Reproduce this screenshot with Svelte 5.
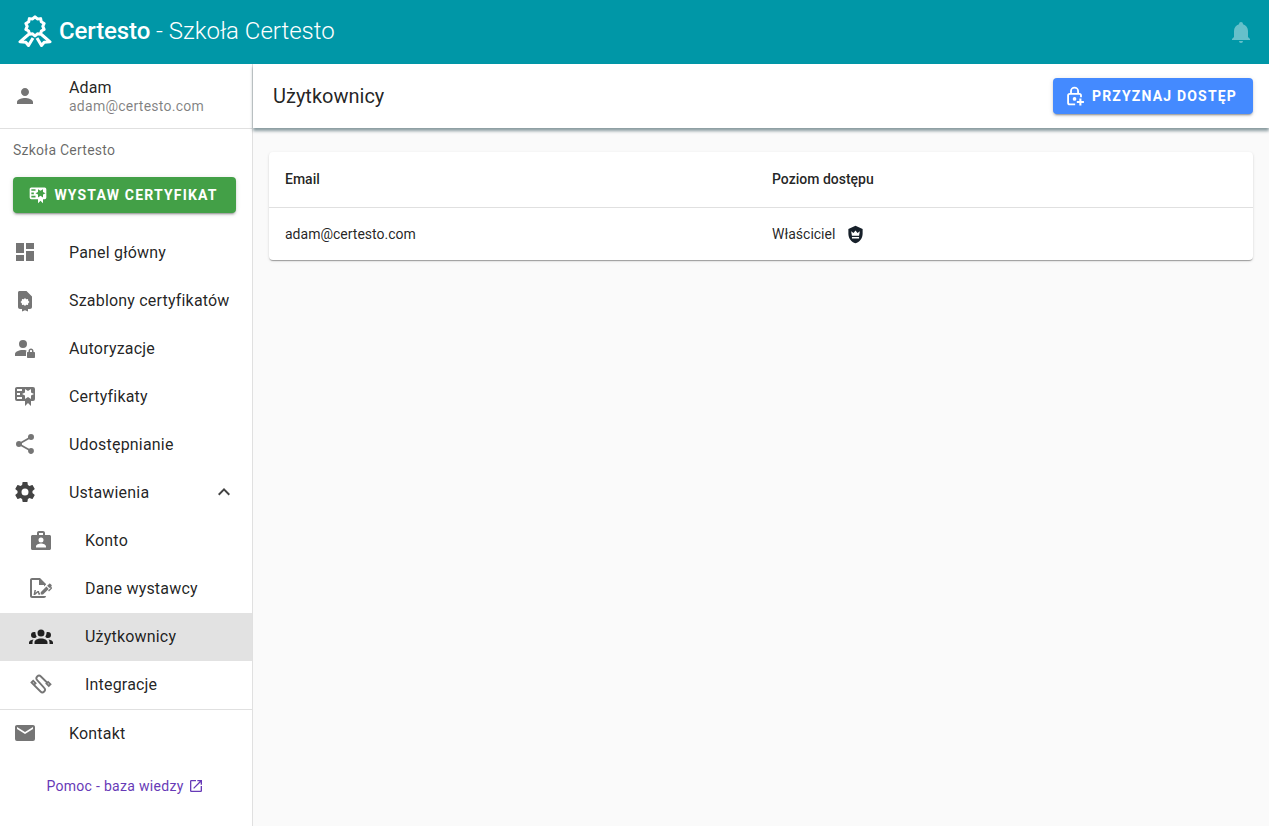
<script>
  const icons = {
    person: "M12 12c2.21 0 4-1.79 4-4s-1.79-4-4-4-4 1.79-4 4 1.79 4 4 4zm0 2c-2.67 0-8 1.34-8 4v2h16v-2c0-2.66-5.33-4-8-4z",
    dashboard: "M13,3V9H21V3M13,21H21V11H13M3,21H11V15H3M3,13H11V3H3V13Z",
    template: "M6.5 3H13.5L19 8.5V19C19 20.1 18.1 21 17 21H15V23.5L12 22.3L9 23.5V21H7C5.9 21 5 20.1 5 19V4.5C5 3.7 5.7 3 6.5 3ZM12 10L13.2 11.3L15 11L15.2 12.8L16.5 14L15.2 15.2L15 17L13.2 16.7L12 18L10.8 16.7L9 17L8.8 15.2L7.5 14L8.8 12.8L9 11L10.8 11.3Z",
    authorization: "M10 4A4 4 0 0 0 6 8A4 4 0 0 0 10 12A4 4 0 0 0 14 8A4 4 0 0 0 10 4M10 14C5.58 14 2 15.79 2 18V20H13V17C13 16 13.2 15.2 13.6 14.4C12.5 14.1 11.3 14 10 14ZM18 12.5C16.6 12.5 15.5 13.6 15.5 15V16H15C14.4 16 14 16.4 14 17V21C14 21.6 14.4 22 15 22H21C21.6 22 22 21.6 22 21V17C22 16.4 21.6 16 21 16H20.5V15C20.5 13.6 19.4 12.5 18 12.5M18 14C18.6 14 19 14.4 19 15V16H17V15C17 14.4 17.4 14 18 14Z",
    certificate: "M4,3C2.89,3 2,3.89 2,5V15A2,2 0 0,0 4,17H12V22L15,19L18,22V17H20A2,2 0 0,0 22,15V8L22,6V5A2,2 0 0,0 20,3H16V3H4M12,5L15,7L18,5V8.5L21,10L18,11.5V15L15,13L12,15V11.5L9,10L12,8.5V5M4,5H9V7H4V5M4,9H7V11H4V9M4,13H9V15H4V13Z",
    share: "M18,16.08C17.24,16.08 16.56,16.38 16.04,16.85L8.91,12.7C8.96,12.47 9,12.24 9,12C9,11.76 8.96,11.53 8.91,11.3L15.96,7.19C16.5,7.69 17.21,8 18,8A3,3 0 0,0 21,5A3,3 0 0,0 18,2A3,3 0 0,0 15,5C15,5.24 15.04,5.47 15.09,5.7L8.04,9.81C7.5,9.31 6.79,9 6,9A3,3 0 0,0 3,12A3,3 0 0,0 6,15C6.79,15 7.5,14.69 8.04,14.19L15.16,18.34C15.11,18.55 15.08,18.77 15.08,19C15.08,20.61 16.39,21.91 18,21.91C19.61,21.91 20.92,20.61 20.92,19A2.92,2.92 0 0,0 18,16.08Z",
    cog: "M12,15.5A3.5,3.5 0 0,1 8.5,12A3.5,3.5 0 0,1 12,8.5A3.5,3.5 0 0,1 15.5,12A3.5,3.5 0 0,1 12,15.5M19.43,12.97C19.47,12.65 19.5,12.33 19.5,12C19.5,11.67 19.47,11.34 19.43,11L21.54,9.37C21.73,9.22 21.78,8.95 21.66,8.73L19.66,5.27C19.54,5.05 19.27,4.96 19.05,5.05L16.56,6.05C16.04,5.66 15.5,5.32 14.87,5.07L14.5,2.42C14.46,2.18 14.25,2 14,2H10C9.75,2 9.54,2.18 9.5,2.42L9.13,5.07C8.5,5.32 7.96,5.66 7.44,6.05L4.95,5.05C4.73,4.96 4.46,5.05 4.34,5.27L2.34,8.73C2.21,8.95 2.27,9.22 2.46,9.37L4.57,11C4.53,11.34 4.5,11.67 4.5,12C4.5,12.33 4.53,12.65 4.57,12.97L2.46,14.63C2.27,14.78 2.21,15.05 2.34,15.27L4.34,18.73C4.46,18.95 4.73,19.03 4.95,18.95L7.44,17.94C7.96,18.34 8.5,18.68 9.13,18.93L9.5,21.58C9.54,21.82 9.75,22 10,22H14C14.25,22 14.46,21.82 14.5,21.58L14.87,18.93C15.5,18.67 16.04,18.34 16.56,17.94L19.05,18.95C19.27,19.03 19.54,18.95 19.66,18.73L21.66,15.27C21.78,15.05 21.73,14.78 21.54,14.63L19.43,12.97Z",
    account: "M10 3H14C15.1 3 16 3.9 16 5V7H20.5C21.3 7 22 7.7 22 8.5V20.5C22 21.3 21.3 22 20.5 22H3.5C2.7 22 2 21.3 2 20.5V8.5C2 7.7 2.7 7 3.5 7H8V5C8 3.9 8.9 3 10 3M10 5V7H14V5H10M12 9.5A2.5 2.5 0 0 0 9.5 12A2.5 2.5 0 0 0 12 14.5A2.5 2.5 0 0 0 14.5 12A2.5 2.5 0 0 0 12 9.5M7 19.5H17V18.5C17 16.5 14.2 15.5 12 15.5C9.8 15.5 7 16.5 7 18.5V19.5Z",
    issuer: "M19.7,12.9L14,18.6H11.7V16.3L17.4,10.6L19.7,12.9M23.1,12.1C23.1,12.4 22.8,12.7 22.5,13L20,15.5L19.1,14.6L21.7,12L21.1,11.4L20.4,12.1L18.1,9.8L20.3,7.7C20.5,7.5 20.9,7.5 21.2,7.7L22.6,9.1C22.8,9.3 22.8,9.7 22.6,10C22.4,10.2 22.2,10.4 22.2,10.6C22.2,10.8 22.4,11 22.6,11.2C22.9,11.5 23.2,11.8 23.1,12.1M3,20V4H10V9H15V10.5L17,8.5V8L11,2H3C1.9,2 1,2.9 1,4V20C1,21.1 1.9,22 3,22H15C16.1,22 17,21.1 17,20H3M11,17.1C10.8,17.1 10.6,17.2 10.5,17.2L10,15H8.5L6.4,16.7L7,14H5.5L4.5,19H6L8.9,16.4L9.5,18.7H10.5L11,18.6V17.1Z",
    users: "M12,5.5A3.5,3.5 0 0,1 15.5,9A3.5,3.5 0 0,1 12,12.5A3.5,3.5 0 0,1 8.5,9A3.5,3.5 0 0,1 12,5.5M5,8C5.56,8 6.08,8.15 6.53,8.42C6.38,9.85 6.8,11.27 7.66,12.38C7.16,13.34 6.16,14 5,14A3,3 0 0,1 2,11A3,3 0 0,1 5,8M19,8A3,3 0 0,1 22,11A3,3 0 0,1 19,14C17.84,14 16.84,13.34 16.34,12.38C17.2,11.27 17.62,9.85 17.47,8.42C17.92,8.15 18.44,8 19,8M5.5,18.25C5.5,16.18 8.41,14.5 12,14.5C15.59,14.5 18.5,16.18 18.5,18.25V20H5.5V18.25M0,20V18.5C0,17.11 1.89,15.94 4.45,15.6C3.86,16.28 3.5,17.22 3.5,18.25V20H0M24,20H20.5V18.25C20.5,17.22 20.14,16.28 19.55,15.6C22.11,15.94 24,17.11 24,18.5V20Z",
    // S-shaped cable with a plug on each end, drawn as a stroke
    integrations: "M5 13L11.5 19.5A2.6 2.6 0 0 0 15.2 15.8L8.2 8.2A2.6 2.6 0 0 1 11.9 4.5L18.5 11M2.5 10.5L4.2 8.8L6.6 11.2L4.9 12.9ZM17.4 11.6L19.1 9.9L21.5 12.3L19.8 14Z",
    mail: "M20,8L12,13L4,8V6L12,11L20,6M20,4H4C2.89,4 2,4.89 2,6V18A2,2 0 0,0 4,20H20A2,2 0 0,0 22,18V6C22,4.89 21.1,4 20,4Z",
  }

  const items = [
    { label: "Panel główny", icon: "dashboard" },
    { label: "Szablony certyfikatów", icon: "template" },
    { label: "Autoryzacje", icon: "authorization" },
    { label: "Certyfikaty", icon: "certificate" },
    { label: "Udostępnianie", icon: "share" },
  ]

  const settings = [
    { label: "Konto", icon: "account" },
    { label: "Dane wystawcy", icon: "issuer" },
    { label: "Użytkownicy", icon: "users", active: true },
    { label: "Integracje", icon: "integrations", stroked: true },
  ]

  // scalloped edge of the logo rosette
  const rosette = Array.from({ length: 20 }, (_, i) => {
    const r = i % 2 ? 7.8 : 9.6
    const a = (i * Math.PI) / 10
    return `${(17 + r * Math.sin(a)).toFixed(2)},${(11.4 - r * Math.cos(a)).toFixed(2)}`
  }).join(" ")
</script>

<div class="app">
  <header class="topbar">
    <svg class="logo" viewBox="0 0 34 34" aria-hidden="true">
      <polygon points={rosette} fill="none" stroke="#fff" stroke-width="3" stroke-linejoin="round" />
      <path d="M10.5 19.5L2 26.8L7.8 27.3L10.5 30.5L15 23M23.5 19.5L32 26.8L26.2 27.3L23.5 30.5L19 23" fill="none" stroke="#fff" stroke-width="3" stroke-linejoin="round" />
    </svg>
    <h1 class="brand"><strong>Certesto</strong> - Szkoła Certesto</h1>
    <svg class="bell" viewBox="0 0 24 24" aria-hidden="true">
      <path d="M21,19V20H3V19L5,17V11C5,7.9 7.03,5.17 10,4.29C10,4.19 10,4.1 10,4A2,2 0 0,1 12,2A2,2 0 0,1 14,4C14,4.1 14,4.19 14,4.29C16.97,5.17 19,7.9 19,11V17L21,19M14,21A2,2 0 0,1 12,23A2,2 0 0,1 10,21" />
    </svg>
  </header>

  <div class="body">
    <aside class="sidebar">
      <div class="user">
        <svg class="icon" viewBox="0 0 24 24" aria-hidden="true"><path d={icons.person} /></svg>
        <div>
          <div class="user-name">Adam</div>
          <div class="user-mail">adam@certesto.com</div>
        </div>
      </div>

      <div class="school">Szkoła Certesto</div>

      <button class="btn issue">
        <svg viewBox="0 0 24 24" aria-hidden="true"><path d={icons.certificate} /></svg>
        Wystaw certyfikat
      </button>

      <nav>
        {#each items as item}
          <div class="item">
            <svg class="icon" viewBox="0 0 24 24" aria-hidden="true"><path d={icons[item.icon]} /></svg>
            <span>{item.label}</span>
          </div>
        {/each}

        <div class="item open">
          <svg class="icon" viewBox="0 0 24 24" aria-hidden="true"><path d={icons.cog} /></svg>
          <span>Ustawienia</span>
          <svg class="chevron" viewBox="0 0 24 24" aria-hidden="true"><path d="M7.41,15.41L12,10.83L16.59,15.41L18,14L12,8L6,14L7.41,15.41Z" /></svg>
        </div>

        {#each settings as item}
          <div class="item sub" class:active={item.active}>
            <svg class="icon" class:stroked={item.stroked} viewBox="0 0 24 24" aria-hidden="true"><path d={icons[item.icon]} /></svg>
            <span>{item.label}</span>
          </div>
        {/each}

        <div class="item contact">
          <svg class="icon" viewBox="0 0 24 24" aria-hidden="true"><path d={icons.mail} /></svg>
          <span>Kontakt</span>
        </div>
      </nav>

      <a class="help" href="#help">
        Pomoc - baza wiedzy
        <svg viewBox="0 0 24 24" aria-hidden="true"><path d="M14,3V5H17.59L7.76,14.83L9.17,16.24L19,6.41V10H21V3M19,19H5V5H12V3H5C3.89,3 3,3.9 3,5V19A2,2 0 0,0 5,21H19A2,2 0 0,0 21,19V12H19V19Z" /></svg>
      </a>
    </aside>

    <main class="main">
      <div class="toolbar">
        <h2>Użytkownicy</h2>
        <button class="btn grant">
          <svg viewBox="0 0 24 24" aria-hidden="true">
            <path d="M11 22H4.5C3.4 22 2.5 21.1 2.5 20V11.5C2.5 10.4 3.4 9.5 4.5 9.5H16C17.1 9.5 18 10.4 18 11.5V13.5M6 9.5V6C6 3.8 8 2 10.25 2C12.5 2 14.5 3.8 14.5 6V9.5" fill="none" stroke="#fff" stroke-width="2.2" />
            <circle cx="10.25" cy="15.5" r="2.2" fill="#fff" />
            <path d="M16 15V18H13V20.5H16V23.5H18.5V20.5H21.5V18H18.5V15Z" fill="#fff" />
          </svg>
          Przyznaj dostęp
        </button>
      </div>

      <div class="content">
        <table class="card">
          <colgroup><col class="col-email" /><col /></colgroup>
          <thead>
            <tr><th>Email</th><th>Poziom dostępu</th></tr>
          </thead>
          <tbody>
            <tr>
              <td>adam@certesto.com</td>
              <td>
                <span class="role">
                  Właściciel
                  <svg viewBox="0 0 24 24" aria-hidden="true"><path d="M12 1L3 5V11C3 16.5 6.8 21.7 12 23C17.2 21.7 21 16.5 21 11V5L12 1ZM17.5 8L16.5 13.5H7.5L6.5 8L9.5 10L12 7L14.5 10ZM7.5 15H16.5V17H7.5Z" /></svg>
                </span>
              </td>
            </tr>
          </tbody>
        </table>
      </div>
    </main>
  </div>
</div>

<style>
  :global(body) {
    font-family: Roboto, "Liberation Sans", sans-serif;
    color: rgba(0, 0, 0, 0.87);
  }
  .app {
    height: 100vh;
    display: flex;
    flex-direction: column;
    overflow: hidden;
  }
  .topbar {
    height: 64px;
    flex: none;
    background: #0097a7;
    color: #fff;
    display: flex;
    align-items: center;
    padding: 0 16px 0 18px;
  }
  .logo {
    width: 34px;
    height: 34px;
    margin-right: 7px;
  }
  .brand {
    margin: 0 0 2px;
    font-size: 24px;
    font-weight: 300;
    line-height: 1;
    flex: 1;
  }
  .brand strong {
    font-weight: 500;
    letter-spacing: -0.12px;
  }
  .bell {
    width: 24px;
    height: 24px;
    fill: rgba(255, 255, 255, 0.4);
  }
  .body {
    flex: 1;
    display: flex;
    min-height: 0;
  }
  .sidebar {
    width: 252px;
    flex: none;
    border-right: 1px solid #e0e0e0;
    background: #fff;
  }
  .user {
    height: 64px;
    display: flex;
    align-items: center;
    gap: 32px;
    padding: 0 13px;
    border-bottom: 1px solid #e0e0e0;
  }
  .user-name {
    font-size: 16px;
    line-height: 20px;
    letter-spacing: 0.15px;
  }
  .user-mail {
    font-size: 14px;
    line-height: 16px;
    letter-spacing: 0.25px;
    color: rgba(0, 0, 0, 0.5);
  }
  .icon {
    width: 24px;
    height: 24px;
    flex: none;
    fill: #757575;
    fill-rule: evenodd;
  }
  .icon.stroked {
    fill: none;
    stroke: #757575;
    stroke-width: 1.8;
  }
  .school {
    font-size: 14px;
    line-height: 16px;
    letter-spacing: 0.25px;
    color: rgba(0, 0, 0, 0.6);
    padding: 13px 13px 0;
  }
  .btn {
    display: flex;
    align-items: center;
    justify-content: center;
    box-sizing: border-box;
    height: 36px;
    padding: 0 3px 0 0;
    border: 0;
    border-radius: 4px;
    color: #fff;
    font-family: inherit;
    font-size: 14px;
    font-weight: 700;
    letter-spacing: 1.18px;
    text-transform: uppercase;
    box-shadow: 0 3px 1px -2px rgba(0, 0, 0, 0.2), 0 2px 2px 0 rgba(0, 0, 0, 0.14), 0 1px 5px 0 rgba(0, 0, 0, 0.12);
  }
  .btn svg {
    width: 20px;
    height: 20px;
    fill: #fff;
    margin-right: 6px;
  }
  .issue {
    width: 223px;
    margin: 19px 0 16px 13px;
    background: #43a047;
  }
  .item {
    box-sizing: border-box;
    height: 48px;
    display: flex;
    align-items: center;
    gap: 32px;
    padding: 0 13px 2px;
    font-size: 16px;
    letter-spacing: 0.19px;
  }
  .item.open .icon {
    fill: #424242;
  }
  .chevron {
    width: 24px;
    height: 24px;
    fill: #424242;
    margin-left: auto;
    margin-right: 3px;
  }
  .sub {
    padding-left: 29px;
  }
  .sub.active {
    background: #e2e2e2;
  }
  .sub.active .icon {
    fill: #212121;
  }
  .contact {
    box-sizing: content-box;
    border-top: 1px solid #e0e0e0;
    height: 46px;
    padding-top: 0;
  }
  .help {
    display: flex;
    align-items: center;
    justify-content: center;
    gap: 4px;
    margin-top: 20px;
    padding-right: 2px;
    font-size: 14px;
    line-height: 16px;
    letter-spacing: 0.3px;
    color: #673ab7;
    text-decoration: none;
  }
  .help svg {
    width: 16px;
    height: 16px;
    fill: #673ab7;
  }
  .main {
    flex: 1;
    min-width: 0;
    background: #fafafa;
    display: flex;
    flex-direction: column;
  }
  .toolbar {
    height: 64px;
    flex: none;
    background: #fff;
    display: flex;
    align-items: center;
    justify-content: space-between;
    padding: 0 16px 0 20px;
    box-shadow: 0 3px 3px rgba(0, 40, 50, 0.45);
  }
  .toolbar h2 {
    margin: 0;
    font-size: 20px;
    font-weight: 400;
  }
  .grant {
    width: 200px;
    background: #448aff;
  }
  .content {
    padding: 24px 16px;
  }
  .card {
    width: 100%;
    table-layout: fixed;
    border-collapse: separate;
    border-spacing: 0;
    background: #fff;
    border-radius: 4px;
    font-size: 14px;
    box-shadow: 0 2px 1px -1px rgba(0, 0, 0, 0.2), 0 1px 1px 0 rgba(0, 0, 0, 0.14), 0 1px 3px 0 rgba(0, 0, 0, 0.12);
  }
  .col-email {
    width: 487px;
  }
  th {
    height: 56px;
    padding: 0 16px 1px;
    text-align: left;
    font-weight: 500;
    border-bottom: 1px solid #e0e0e0;
    box-sizing: border-box;
  }
  td {
    height: 52px;
    padding: 0 16px;
  }
  .role {
    display: flex;
    align-items: center;
    gap: 11px;
  }
  .role svg {
    width: 19px;
    height: 19px;
    fill: #17202a;
    fill-rule: evenodd;
  }
</style>
